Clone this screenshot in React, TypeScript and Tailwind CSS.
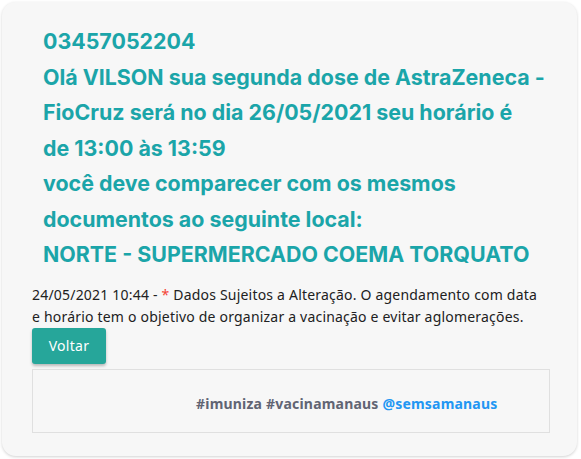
import React from "react";

export default function App() {
  return (
    <div className="w-[581px] h-[459px] bg-white p-[2px] pr-[4px] pb-[3px]">
      <div className="h-full rounded-[14px] bg-[#f7f7f7] shadow-[0_1px_3px_rgba(0,0,0,0.18)] pl-[30px] pr-[20px] pt-[22px] font-['Noto_Sans',sans-serif]">
        <div className="pl-[11px] text-[#1ba5a9] font-bold text-[21.4px] leading-[35.5px] font-['Inter',sans-serif] whitespace-nowrap">
          03457052204
          <br />
          Olá VILSON sua segunda dose de AstraZeneca -
          <br />
          FioCruz será no dia 26/05/2021 seu horário é
          <br />
          de 13:00 às 13:59
          <br />
          você deve comparecer com os mesmos
          <br />
          documentos ao seguinte local:
          <br />
          NORTE - SUPERMERCADO COEMA TORQUATO
        </div>
        <p className="mt-[11px] text-[14px] leading-[22px] tracking-[0.2px] text-[#212121] whitespace-nowrap">
          24/05/2021 10:44 - <span className="text-[#f44336]">*</span> Dados Sujeitos a Alteração. O agendamento com data
          <br />
          e horário tem o objetivo de organizar a vacinação e evitar aglomerações.
        </p>
        <button className="block h-[36px] w-[74px] rounded-[3px] bg-[#26a69a] text-white text-[14px] tracking-[0.3px] shadow-[0_2px_3px_rgba(0,0,0,0.25)]">
          Voltar
        </button>
        <div className="mt-[5px] mr-[7px] h-[64px] border border-[#e0e0e0] flex items-center pl-[163px] pt-[6px]">
          <span className="font-bold text-[14px] tracking-[0.2px] text-[#616473]">
            #imuniza #vacinamanaus <span className="text-[#2196f3]">@semsamanaus</span>
          </span>
        </div>
      </div>
    </div>
  );
}
